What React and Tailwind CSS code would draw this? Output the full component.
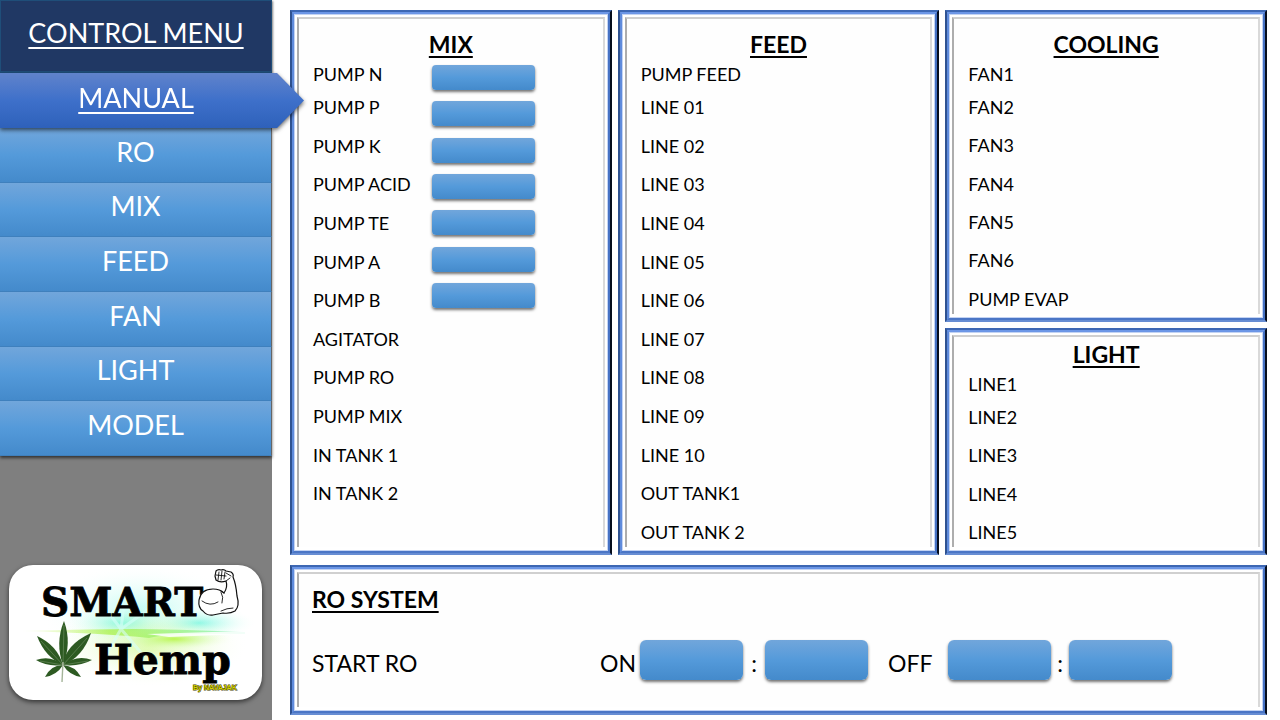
import React, { useState } from "react";

const MENU = ["RO", "MIX", "FEED", "FAN", "LIGHT", "MODEL"];

const MIX = [
  "PUMP N", "PUMP P", "PUMP K", "PUMP ACID", "PUMP TE", "PUMP A", "PUMP B",
  "AGITATOR", "PUMP RO", "PUMP MIX", "IN TANK 1", "IN TANK 2",
];
const FEED = [
  "PUMP FEED", "LINE 01", "LINE 02", "LINE 03", "LINE 04", "LINE 05", "LINE 06",
  "LINE 07", "LINE 08", "LINE 09", "LINE 10", "OUT TANK1", "OUT TANK 2",
];
const COOLING = ["FAN1", "FAN2", "FAN3", "FAN4", "FAN5", "FAN6", "PUMP EVAP"];
const LIGHT = ["LINE1", "LINE2", "LINE3", "LINE4", "LINE5"];

// pumps that can be switched by hand
const SWITCHED = MIX.slice(0, 7);

const BLUE = "bg-linear-to-b from-[#71a6db] via-[#549ada] to-[#448acb]";

// beveled frame: outer dark edge, light edge, then the grey inner line
function Panel({ className = "", children }) {
  return (
    <section className={`flex border-2 border-t-[#3d67b3] border-l-[#2f5291] border-r-[#060d1c] border-b-[#678dd3] ${className}`}>
      <div className="flex flex-1 border-2 border-t-[#6c96e6] border-l-[#5f8bdc] border-r-[#4672c4] border-b-[#4b76c6]">
        <div className="flex flex-1 border border-[#c3d3f3] px-[2px] pt-[2px] pb-[3px]">
          <div className="flex flex-1 flex-col border-t-2 border-r-2 border-l-2 border-t-[#d0d0d0] border-r-[#d9d9d9] border-l-[#adadad] bg-[#fefefe]">
            {children}
          </div>
        </div>
      </div>
    </section>
  );
}

function Title({ children }) {
  return (
    <h2 className="text-[23px] leading-[30px] font-bold underline decoration-2 underline-offset-[3px]">
      {children}
    </h2>
  );
}

// rows: first one is short, the others share the remaining height
function List({ items, className }) {
  return (
    <ul className={`-mb-1 grid flex-1 pl-[14px] text-lg leading-[22px] ${className}`}>
      {items.map((t) => (
        <li key={t} className="flex items-center">{t}</li>
      ))}
    </ul>
  );
}

function TimeBox({ label }) {
  return (
    <input
      type="text"
      aria-label={label}
      className={`h-10 w-[103px] rounded-md text-center text-white shadow-[0_2px_3px_rgba(0,0,0,0.55)] outline-none ${BLUE}`}
    />
  );
}

function Logo() {
  return (
    <svg viewBox="0 0 253 135" className="h-[135px] w-full" role="img" aria-label="Smart Hemp">
      <defs>
        <radialGradient id="cyan">
          <stop offset="0" stopColor="#5ff5e2" stopOpacity="0.75" />
          <stop offset="0.5" stopColor="#a8fbe9" stopOpacity="0.35" />
          <stop offset="1" stopColor="#ffffff" stopOpacity="0" />
        </radialGradient>
        <radialGradient id="lime">
          <stop offset="0" stopColor="#b4f53c" stopOpacity="0.85" />
          <stop offset="0.5" stopColor="#d0fb9c" stopOpacity="0.45" />
          <stop offset="1" stopColor="#ffffff" stopOpacity="0" />
        </radialGradient>
        <linearGradient id="ray">
          <stop offset="0" stopColor="#c8f76a" stopOpacity="0" />
          <stop offset="0.4" stopColor="#a9f03c" />
          <stop offset="1" stopColor="#7ff2c0" />
        </linearGradient>
      </defs>

      {/* glow */}
      <ellipse cx="132" cy="46" rx="104" ry="48" fill="url(#cyan)" opacity="0.55" />
      <ellipse cx="112" cy="58" rx="56" ry="18" fill="url(#cyan)" />
      <ellipse cx="190" cy="58" rx="58" ry="16" fill="url(#cyan)" />
      <ellipse cx="140" cy="80" rx="100" ry="42" fill="url(#lime)" opacity="0.55" />
      <ellipse cx="165" cy="74" rx="62" ry="12" fill="url(#lime)" />
      <path d="M10 66 Q90 64 125 64 T236 67 L236 69 Q160 68 140 73 Q95 68 10 66Z" fill="url(#ray)" opacity="0.7" />
      <path d="M138 69 L236 66 L236 69 L160 72Z" fill="#ffffff" opacity="0.85" />
      <path d="M112 64 L92 38 M112 64 L116 30 M112 64 L140 44 M112 64 L96 92 M112 64 L134 90" stroke="#d9fffa" strokeWidth="3" opacity="0.6" />

      <g fontFamily="DejaVu Serif, serif" fontWeight="700" stroke="#000000" strokeWidth="0.8">
        <text x="32" y="51" fontSize="39">SMART</text>
        <text x="85" y="109" fontSize="41">Hemp</text>
      </g>
      <text x="184" y="125" fontFamily="Liberation Sans, sans-serif" fontWeight="700" fontSize="7" fill="#d8d400" stroke="#3c3a00" strokeWidth="1" paintOrder="stroke">By NAVAJAK</text>

      {/* flexed arm */}
      <path
        d="M207 15 L206 11 L207 6 Q209 4 212 5 Q215 4 217 6 L222 7 Q225 9 224 12 Q227 19 228 31 Q231 41 226 46 Q221 49 214 48 Q209 49 204 50 Q198 51 194 46 Q189 43 190 35 Q192 24 204 24 Q211 24 215 28 Q219 22 217 16 Q211 18 207 15Z"
        fill="#ffffff" stroke="#111111" strokeWidth="1.2" strokeLinejoin="round"
      />
      <path d="M193 36 Q201 42 209 37 M212 27 Q215 32 213 38 M215 28 L212 26 M210 7 L209 15 M213 6 L212 15 M216 7 L215 14 M207 10 L217 11 M217 8 L222 11 M217 16 L221 13 M212 46 Q218 43 224 43" fill="none" stroke="#111111" strokeWidth="0.9" strokeLinecap="round" />

      {/* leaf */}
      <g fill="#2d5a22">
        <path d="M54 100 Q46 78 55 56 Q63 78 54 100Z" />
        <path d="M54 100 Q36 92 28 71 Q48 80 54 100Z" />
        <path d="M54 100 Q56 80 82 68 Q74 92 54 100Z" />
        <path d="M54 100 Q38 102 27 95 Q42 90 54 100Z" />
        <path d="M54 100 Q68 89 83 95 Q70 102 54 100Z" />
        <path d="M54 100 Q48 110 36 112 Q42 100 54 100Z" />
        <path d="M54 100 Q66 101 72 112 Q60 110 54 100Z" />
      </g>
      <path d="M54 100 L55 60 M54 100 L32 76 M54 100 L78 73 M54 100 L31 96 M54 100 L79 96" stroke="#7f9d72" strokeWidth="0.5" />
      <path d="M54 97 L53 117" stroke="#a4b499" strokeWidth="1.4" />
    </svg>
  );
}

export default function App() {
  const [page, setPage] = useState("MANUAL");
  const [on, setOn] = useState({});

  return (
    <div className="flex min-h-screen bg-white font-['Lato',sans-serif] text-black">
      {/* SIDEBAR */}
      <aside className="flex w-[272px] shrink-0 flex-col bg-[#7f7f7f]">
        <h1 className="flex h-[73px] items-center justify-center border border-b-2 border-[#1f4e79] bg-[#203864] pb-[6px] text-[27px] leading-9 text-white underline decoration-2 underline-offset-[4px] shadow-[1px_1px_2px_rgba(0,0,0,0.5)]">
          CONTROL MENU
        </h1>

        <nav className="flex flex-col text-[27px] leading-9 text-white">
          <div className="relative z-10 -mr-8 drop-shadow-[0_2px_2px_rgba(0,0,0,0.6)]">
            <button
              onClick={() => setPage("MANUAL")}
              aria-current={page === "MANUAL"}
              className="flex h-[55px] w-full items-center justify-center bg-linear-to-b from-[#6083cb] via-[#3e70ca] to-[#2e61ba] pr-8 pb-[6px] underline decoration-2 underline-offset-[4px] [clip-path:polygon(0_0,calc(100%-27px)_0,100%_50%,calc(100%-27px)_100%,0_100%)]"
            >
              MANUAL
            </button>
          </div>
          <div className="grid h-[328px] auto-rows-fr shadow-[0_2px_3px_rgba(0,0,0,0.6)]">
            {MENU.map((m) => (
              <button
                key={m}
                onClick={() => setPage(m)}
                aria-current={page === m}
                className={`flex items-center justify-center border-r border-b border-r-[#666666] border-b-[#3f80bd] pb-[6px] ${BLUE}`}
              >
                {m}
              </button>
            ))}
          </div>
        </nav>

        <div className="mx-[9px] mt-auto mb-5 mr-[10px] rounded-3xl bg-white shadow-[0_2px_5px_rgba(0,0,0,0.6)]">
          <Logo />
        </div>
      </aside>

      {/* PANELS */}
      <main className="flex flex-1 flex-col gap-[10px] pt-[10px] pr-[13px] pb-[5px] pl-[18px]">
        <div className="grid flex-1 grid-cols-3 grid-rows-[312fr_227fr] gap-[6px]">
          <Panel className="row-span-2">
            <div className="pt-[10px] text-center"><Title>MIX</Title></div>
            <div className="flex flex-1">
              <List items={MIX} className="grid-rows-[29px_repeat(12,1fr)]" />
              <div className="mt-[6px] mr-[68px] flex h-[243px] flex-col justify-between">
                {SWITCHED.map((p) => (
                  <button
                    key={p}
                    aria-label={p}
                    aria-pressed={!!on[p]}
                    onClick={() => setOn({ ...on, [p]: !on[p] })}
                    className={`h-[25px] w-[103px] rounded-sm shadow-[0_2px_3px_rgba(0,0,0,0.55)] ${BLUE}`}
                  />
                ))}
              </div>
            </div>
          </Panel>

          <Panel className="row-span-2">
            <div className="pt-[10px] text-center"><Title>FEED</Title></div>
            <List items={FEED} className="grid-rows-[29px_repeat(12,1fr)]" />
          </Panel>

          <Panel>
            <div className="pt-[10px] text-center"><Title>COOLING</Title></div>
            <List items={COOLING} className="grid-rows-[29px_repeat(6,1fr)]" />
          </Panel>

          <Panel>
            <div className="pt-[2px] text-center"><Title>LIGHT</Title></div>
            <List items={LIGHT} className="grid-rows-[29px_repeat(4,1fr)]" />
          </Panel>
        </div>

        <Panel className="h-[150px]">
          <div className="px-[13px] pt-[10px]"><Title>RO SYSTEM</Title></div>
          <div className="flex pt-[26px] pl-[13px] text-[23px] leading-[46px]">
            <div className="w-[288px]">START RO</div>
            <div className="w-10">ON</div>
            <TimeBox label="On hour" />
            <div className="w-[22px] text-center">:</div>
            <TimeBox label="On minute" />
            <div className="w-20 pl-5">OFF</div>
            <TimeBox label="Off hour" />
            <div className="w-[18px] text-center">:</div>
            <TimeBox label="Off minute" />
          </div>
        </Panel>
      </main>
    </div>
  );
}
